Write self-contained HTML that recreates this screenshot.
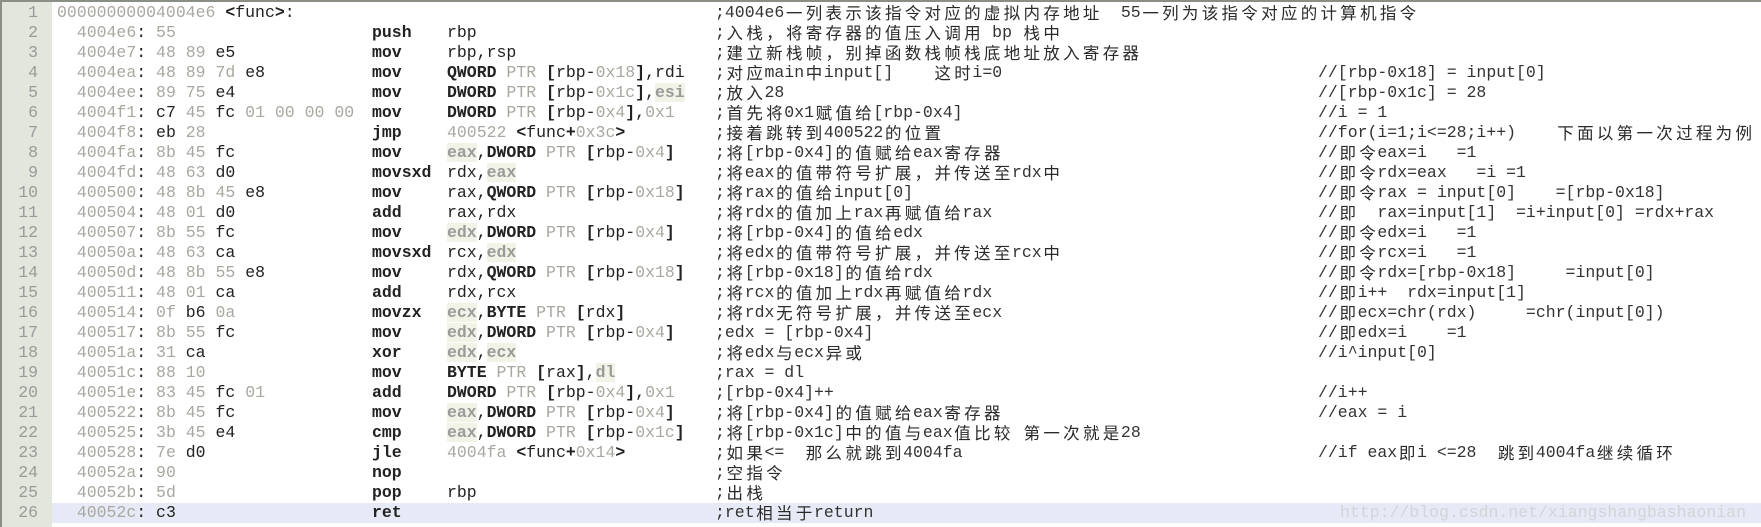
<!DOCTYPE html>
<html><head><meta charset="utf-8"><style>
body{margin:0;width:1761px;height:527px;background:#fff;position:relative;overflow:hidden;font-family:"Liberation Mono","Noto Sans CJK SC",monospace;font-size:16.5px;color:#222}
#top{position:absolute;left:0;top:0;width:1761px;height:2px;background:#8a8f86}
#lb{position:absolute;left:0;top:0;width:2px;height:527px;background:#8a8f86}
#gut{position:absolute;left:2px;top:2px;width:50px;height:525px;background:#e2e6dc}
.row{position:absolute;left:0;width:1761px;height:20px;line-height:20px;white-space:pre}
.row span.c{position:absolute;top:0}
.n{left:2px;width:36px;text-align:right;color:#9a9a9a}
.a{left:57px}.m{left:372px;font-weight:bold}.o{left:447px}.t{left:715px;color:#333}.u{left:1318px;color:#333}
.g{color:#a8a8a0;font-weight:normal}
.b{font-weight:bold}
.r{color:#9a9a9a;font-weight:bold;background:#f1f3e6}
.k{display:inline-block;width:19.8px;text-align:center;font-family:"Noto Sans CJK SC",sans-serif;font-size:16.5px;line-height:20px;vertical-align:top;position:relative;top:-1px;color:#2a2a2a}
#hl{position:absolute;left:52px;top:503px;width:1709px;height:20px;background:#e6eaf6}
#wm{position:absolute;left:1340px;top:503px;line-height:20px;font-size:16.5px;color:#d2d4d8;font-family:"Liberation Mono",monospace}
</style></head><body>
<div id="gut"></div><div id="top"></div><div id="lb"></div>
<div id="hl"></div>
<div id="wm">http://blog.csdn.net/xiangshangbashaonian</div>
<div id="rows"></div>
<script>
var L=[
["00000000004004e6 <func>:","","",";4004e6一列表示该指令对应的虚拟内存地址  55一列为该指令对应的计算机指令",""],
["  4004e6: 55","push","rbp",";入栈，将寄存器的值压入调用 bp 栈中",""],
["  4004e7: 48 89 e5","mov","rbp,rsp",";建立新栈帧，别掉函数栈帧栈底地址放入寄存器",""],
["  4004ea: 48 89 7d e8","mov","QWORD PTR [rbp-0x18],rdi",";对应main中input[]    这时i=0","//[rbp-0x18] = input[0]"],
["  4004ee: 89 75 e4","mov","DWORD PTR [rbp-0x1c],esi",";放入28","//[rbp-0x1c] = 28"],
["  4004f1: c7 45 fc 01 00 00 00","mov","DWORD PTR [rbp-0x4],0x1",";首先将0x1赋值给[rbp-0x4]","//i = 1"],
["  4004f8: eb 28","jmp","400522 <func+0x3c>",";接着跳转到400522的位置","//for(i=1;i<=28;i++)    下面以第一次过程为例"],
["  4004fa: 8b 45 fc","mov","eax,DWORD PTR [rbp-0x4]",";将[rbp-0x4]的值赋给eax寄存器","//即令eax=i   =1"],
["  4004fd: 48 63 d0","movsxd","rdx,eax",";将eax的值带符号扩展，并传送至rdx中","//即令rdx=eax   =i =1"],
["  400500: 48 8b 45 e8","mov","rax,QWORD PTR [rbp-0x18]",";将rax的值给input[0]","//即令rax = input[0]    =[rbp-0x18]"],
["  400504: 48 01 d0","add","rax,rdx",";将rdx的值加上rax再赋值给rax","//即  rax=input[1]  =i+input[0] =rdx+rax"],
["  400507: 8b 55 fc","mov","edx,DWORD PTR [rbp-0x4]",";将[rbp-0x4]的值给edx","//即令edx=i   =1"],
["  40050a: 48 63 ca","movsxd","rcx,edx",";将edx的值带符号扩展，并传送至rcx中","//即令rcx=i   =1"],
["  40050d: 48 8b 55 e8","mov","rdx,QWORD PTR [rbp-0x18]",";将[rbp-0x18]的值给rdx","//即令rdx=[rbp-0x18]     =input[0]"],
["  400511: 48 01 ca","add","rdx,rcx",";将rcx的值加上rdx再赋值给rdx","//即i++  rdx=input[1]"],
["  400514: 0f b6 0a","movzx","ecx,BYTE PTR [rdx]",";将rdx无符号扩展，并传送至ecx","//即ecx=chr(rdx)     =chr(input[0])"],
["  400517: 8b 55 fc","mov","edx,DWORD PTR [rbp-0x4]",";edx = [rbp-0x4]","//即edx=i    =1"],
["  40051a: 31 ca","xor","edx,ecx",";将edx与ecx异或","//i^input[0]"],
["  40051c: 88 10","mov","BYTE PTR [rax],dl",";rax = dl",""],
["  40051e: 83 45 fc 01","add","DWORD PTR [rbp-0x4],0x1",";[rbp-0x4]++","//i++"],
["  400522: 8b 45 fc","mov","eax,DWORD PTR [rbp-0x4]",";将[rbp-0x4]的值赋给eax寄存器","//eax = i"],
["  400525: 3b 45 e4","cmp","eax,DWORD PTR [rbp-0x1c]",";将[rbp-0x1c]中的值与eax值比较 第一次就是28",""],
["  400528: 7e d0","jle","4004fa <func+0x14>",";如果<=  那么就跳到4004fa","//if eax即i <=28  跳到4004fa继续循环"],
["  40052a: 90","nop","",";空指令",""],
["  40052b: 5d","pop","rbp",";出栈",""],
["  40052c: c3","ret","",";ret相当于return",""]
];
function esc(s){return s.replace(/&/g,"&amp;").replace(/</g,"&lt;").replace(/>/g,"&gt;");}
function code(s){
 s=esc(s);
 s=s.replace(/\b(e[a-d]x|esi|edi|dl)\b/g,'<span class="r">$1</span>');
 s=s.replace(/\b(QWORD|DWORD|BYTE)\b/g,'<span class="b">$1</span>');
 s=s.replace(/\bPTR\b/g,'<span class="g">PTR</span>');
 s=s.replace(/\b(\d[0-9a-fx]*)\b/g,'<span class="g">$1</span>');
 s=s.replace(/([\[\]+]|&lt;|&gt;)/g,'<b>$1</b>');
 return s;
}
function cjk(s){return esc(s).replace(/([\u3000-\u9fff\uff00-\uffef])/g,'<span class="k">$1</span>');}
var h="";
for(var i=0;i<L.length;i++){
 var r=L[i],y=3+i*20;
 h+='<div class="row" style="top:'+y+'px"><span class="c n">'+(i+1)+'</span><span class="c a">'+code(r[0])+'</span><span class="c m">'+r[1]+'</span><span class="c o">'+code(r[2])+'</span><span class="c t">'+cjk(r[3])+'</span><span class="c u">'+cjk(r[4])+'</span></div>';
}
document.getElementById("rows").innerHTML=h;
</script>
</body></html>
